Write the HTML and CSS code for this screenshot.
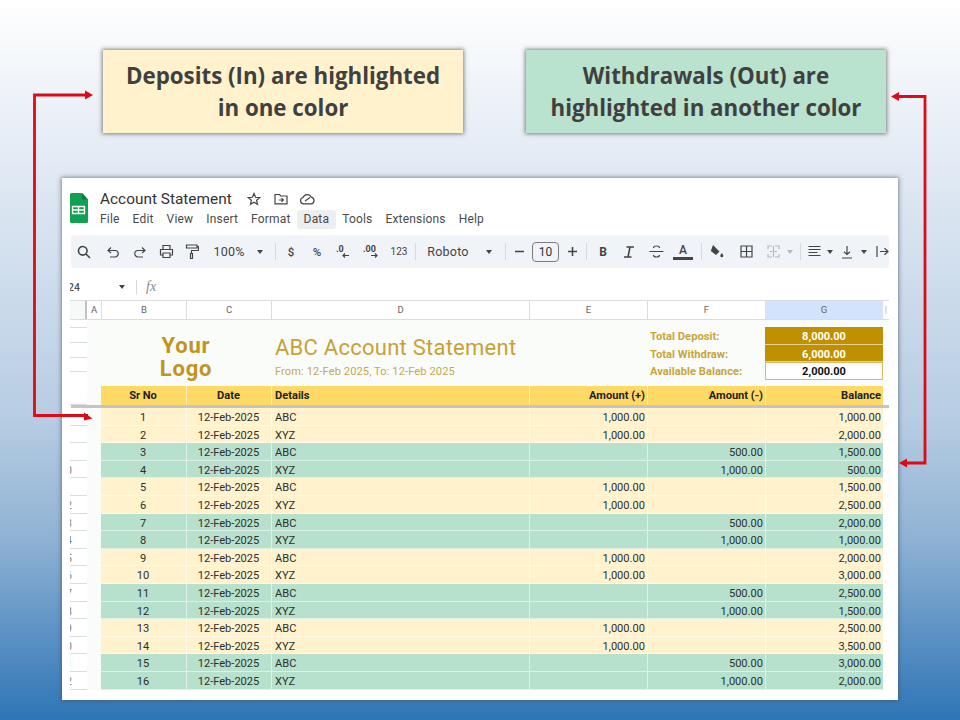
FILE: index.html
```html
<!DOCTYPE html>
<html lang="en">
<head>
<meta charset="utf-8">
<title>Account Statement</title>
<link rel="stylesheet" href="styles.css">
</head>
<body>
<svg class="arrows" width="960" height="720" viewBox="0 0 960 720" aria-hidden="true">
  <path class="arrow-line" d="M86 95H34.500V415.500H88"/>
  <path class="arrow-line" d="M898 96.500H925V463H906"/>
  <path class="arrow-head" d="M85 90.500L93 95L85 99.500Z"/>
  <path class="arrow-head" d="M84 412.500L92.500 418.500L84 420.500Z"/>
  <path class="arrow-head" d="M899 92L891 96.500L899 101Z"/>
  <path class="arrow-head" d="M907 458.500L899 463L907 467.500Z"/>
</svg>
<div class="callouts">
  <div class="callout callout-in">Deposits (In) are highlighted<br>in one color</div>
  <div class="callout callout-out">Withdrawals (Out) are<br>highlighted in another color</div>
</div>
<main class="window">
  <header class="doc-head">
    <svg class="sheets-logo" width="18" height="30" viewBox="0 0 18 30"><path fill="#12a150" d="M1.500 0H12L18 6.500V28.500A1.500 1.500 0 0 1 16.500 30H1.500A1.500 1.500 0 0 1 0 28.500V1.500A1.500 1.500 0 0 1 1.500 0Z"/><path fill="#0b7d3c" d="M12 0L18 6.500H13A1 1 0 0 1 12 5.500Z"/><path fill="none" stroke="#fff" stroke-width="1.300" d="M2.500 13.500H14.500V20.500H2.500ZM2.500 17H14.500M8.500 13.500V20.500"/></svg>
    <div class="doc-text">
      <div class="doc-title-row">
        <span class="doc-title">Account Statement</span>
        <svg class="i-star" width="14" height="14" viewBox="0 0 14 14"><path class="ico" d="M7 1.500L8.600 5.300L12.700 5.600L9.600 8.300L10.500 12.300L7 10.200L3.500 12.300L4.400 8.300L1.300 5.600L5.400 5.300Z"/></svg>
        <svg class="i-folder" width="14" height="12" viewBox="0 0 14 12"><path class="ico" d="M1 1.500H5.500L6.800 3H13V10.800H1ZM5 7H9M7.500 5.300L9.300 7L7.500 8.700"/></svg>
        <svg class="i-cloud" width="17" height="12" viewBox="0 0 17 12"><path class="ico" d="M4.500 10.800A3.200 3.200 0 0 1 4 4.500A4.500 4.500 0 0 1 12.300 4.200A3.400 3.400 0 0 1 12.500 10.800ZM6 8L11 4.500"/></svg>
      </div>
      <nav class="menu">
        <span>File</span><span>Edit</span><span>View</span><span>Insert</span><span>Format</span><span class="menu-on">Data</span><span>Tools</span><span>Extensions</span><span>Help</span>
      </nav>
    </div>
  </header>

  <div class="toolbar">
    <span class="tb w26"><svg width="14" height="14" viewBox="0 0 14 14"><path class="ico ico-b" d="M5.800 1.500A4.300 4.300 0 1 1 5.700 10.100A4.300 4.300 0 0 1 5.800 1.500ZM8.800 8.800L13 13"/></svg></span>
    <span class="tb w32"><svg width="14" height="14" viewBox="0 0 14 14"><path class="ico" d="M5 2.500L2 5.500L5 8M2.500 5.500H9A3 3 0 0 1 9 12H4"/></svg></span>
    <span class="tb w22"><svg width="14" height="14" viewBox="0 0 14 14"><path class="ico" d="M9 2.500L12 5.500L9 8M11.500 5.500H5A3 3 0 0 0 5 12H10"/></svg></span>
    <span class="tb w30"><svg width="15" height="15" viewBox="0 0 15 15"><path class="ico" d="M4 5V1.500H11V5M3.500 11H1.500V5.500H13.500V11H11.500M4 9H11V13.500H4Z"/></svg></span>
    <span class="tb w22"><svg width="14" height="16" viewBox="0 0 14 16"><path class="ico" d="M1.500 1H12V4H1.500ZM12 2.500H13.500V6.500H6.500V9.500M5.500 9.500H7.500V14.500H5.500Z"/></svg></span>
    <span class="tb w52 tb-text">100%</span>
    <span class="tb w10"><i class="caret"></i></span>
    <i class="sep sep-g"></i>
    <span class="tb w30 tb-small">$</span>
    <span class="tb w22 tb-small">%</span>
    <span class="tb w30"><svg width="16" height="15" viewBox="0 0 16 15"><text class="ico-text" x="1" y="8">.0</text><path class="ico" d="M14 11.500H8M10 9.500L8 11.500L10 13.500"/></svg></span>
    <span class="tb w28"><svg width="20" height="15" viewBox="0 0 20 15"><text class="ico-text" x="1" y="8">.00</text><path class="ico" d="M9 11.500H15M13 9.500L15 11.500L13 13.500"/></svg></span>
    <span class="tb w26 tb-tiny">123</span>
    <i class="sep sep-a"></i>
    <span class="tb w64 tb-text">Roboto</span>
    <span class="tb w18"><i class="caret"></i></span>
    <i class="sep sep-b"></i>
    <span class="tb w26"><svg width="11" height="11" viewBox="0 0 11 11"><path class="ico ico-b" d="M1 5.500H10"/></svg></span>
    <span class="size-box">10</span>
    <span class="tb w26"><svg width="11" height="11" viewBox="0 0 11 11"><path class="ico ico-b" d="M1 5.500H10M5.500 1V10"/></svg></span>
    <i class="sep sep-c"></i>
    <span class="tb w32 tb-b">B</span>
    <span class="tb w20"><svg width="12" height="12" viewBox="0 0 12 12"><path class="ico ico-b" d="M3.500 1H11M1 11H8.500M7 1L5 11"/></svg></span>
    <span class="tb w34"><svg width="15" height="13" viewBox="0 0 15 13"><path class="ico" d="M0.500 6.500H14.500M10.500 3A3 2 0 0 0 4.500 3M4.500 10A3 2 0 0 0 10.500 10"/></svg></span>
    <span class="tb w20"><svg width="20" height="18" viewBox="0 0 20 18"><text class="ico-a" x="10" y="11">A</text><rect x="0" y="14" width="20" height="3" fill="#444"/></svg></span>
    <i class="sep sep-d"></i>
    <span class="tb w30"><svg width="14" height="13" viewBox="0 0 14 13"><path fill="#444" d="M3 0L9.500 6.500L6 10L0.800 6ZM11.800 8C13 9.500 13.300 10 13.300 10.700A1.500 1.500 0 0 1 10.300 10.700C10.300 10 10.800 9.500 11.800 8Z"/></svg></span>
    <span class="tb w28"><svg width="13" height="13" viewBox="0 0 13 13"><path class="ico" d="M1 1H12V12H1ZM1 6.500H12M6.500 1V12"/></svg></span>
    <span class="tb w26"><svg width="13" height="13" viewBox="0 0 13 13"><path class="ico ico-dim" d="M1 4V1H5M8 1H12V4M1 9V12H5M8 12H12V9M3 6.500H5.500M7.500 6.500H10M6.500 1V12"/></svg></span>
    <span class="tb w8"><i class="caret caret-dim"></i></span>
    <i class="sep sep-e"></i>
    <span class="tb w26"><svg width="13" height="13" viewBox="0 0 13 13"><path class="ico" d="M0.500 1.500H12.500M0.500 4.500H12.500M0.500 7.500H9.500M0.500 10.500H12.500"/></svg></span>
    <span class="tb w6"><i class="caret"></i></span>
    <span class="tb w28"><svg width="12" height="14" viewBox="0 0 12 14"><path class="ico" d="M6 1V9.500M3 6.800L6 9.500L9 6.800M1 13H11"/></svg></span>
    <span class="tb w6"><i class="caret"></i></span>
    <span class="tb w30"><svg width="13" height="13" viewBox="0 0 13 13"><path class="ico" d="M1 1V12M4 6.500H12M8.500 3.200L12 6.500L8.500 9.800"/></svg></span>
  </div>

  <div class="formula">
    <span class="name-box">24</span>
    <i class="caret"></i>
    <i class="sep sep-f"></i>
    <span class="fx">fx</span>
  </div>

  <div class="sheet">
    <div class="grid col-heads">
      <div class="corner"></div>
      <div>A</div><div>B</div><div>C</div><div>D</div><div>E</div><div>F</div><div class="col-on">G</div><div class="col-h">|</div>
    </div>

    <div class="grid summary">
      <div class="gutter gutter-span"><i></i><i></i><i></i><i></i></div>
      <div class="logo">Your<br>Logo</div>
      <div class="report">
        <div class="report-title">ABC Account Statement</div>
        <div class="report-range">From: 12-Feb 2025, To: 12-Feb 2025</div>
      </div>
      <div class="totals">
        <div class="tot-label">Total Deposit:</div><div class="tot-val">8,000.00</div>
        <div class="tot-label">Total Withdraw:</div><div class="tot-val">6,000.00</div>
        <div class="tot-label">Available Balance:</div><div class="tot-val tot-final">2,000.00</div>
      </div>
    </div>

    <div class="grid row head">
      <div class="rn"></div><div class="a"></div><div class="c">Sr No</div><div class="c">Date</div><div>Details</div><div class="r">Amount (+)</div><div class="r">Amount (-)</div><div class="r">Balance</div>
    </div>
    <div class="freeze"></div>

    <div class="grid row in"><div class="rn"></div><div class="a"></div><div class="c">1</div><div class="c">12-Feb-2025</div><div>ABC</div><div class="r">1,000.00</div><div class="r"></div><div class="r">1,000.00</div></div>
    <div class="grid row in"><div class="rn"></div><div class="a"></div><div class="c">2</div><div class="c">12-Feb-2025</div><div>XYZ</div><div class="r">1,000.00</div><div class="r"></div><div class="r">2,000.00</div></div>
    <div class="grid row out"><div class="rn"></div><div class="a"></div><div class="c">3</div><div class="c">12-Feb-2025</div><div>ABC</div><div class="r"></div><div class="r">500.00</div><div class="r">1,500.00</div></div>
    <div class="grid row out"><div class="rn">10</div><div class="a"></div><div class="c">4</div><div class="c">12-Feb-2025</div><div>XYZ</div><div class="r"></div><div class="r">1,000.00</div><div class="r">500.00</div></div>
    <div class="grid row in"><div class="rn"></div><div class="a"></div><div class="c">5</div><div class="c">12-Feb-2025</div><div>ABC</div><div class="r">1,000.00</div><div class="r"></div><div class="r">1,500.00</div></div>
    <div class="grid row in"><div class="rn">12</div><div class="a"></div><div class="c">6</div><div class="c">12-Feb-2025</div><div>XYZ</div><div class="r">1,000.00</div><div class="r"></div><div class="r">2,500.00</div></div>
    <div class="grid row out"><div class="rn">13</div><div class="a"></div><div class="c">7</div><div class="c">12-Feb-2025</div><div>ABC</div><div class="r"></div><div class="r">500.00</div><div class="r">2,000.00</div></div>
    <div class="grid row out"><div class="rn">14</div><div class="a"></div><div class="c">8</div><div class="c">12-Feb-2025</div><div>XYZ</div><div class="r"></div><div class="r">1,000.00</div><div class="r">1,000.00</div></div>
    <div class="grid row in"><div class="rn">15</div><div class="a"></div><div class="c">9</div><div class="c">12-Feb-2025</div><div>ABC</div><div class="r">1,000.00</div><div class="r"></div><div class="r">2,000.00</div></div>
    <div class="grid row in"><div class="rn">16</div><div class="a"></div><div class="c">10</div><div class="c">12-Feb-2025</div><div>XYZ</div><div class="r">1,000.00</div><div class="r"></div><div class="r">3,000.00</div></div>
    <div class="grid row out"><div class="rn">17</div><div class="a"></div><div class="c">11</div><div class="c">12-Feb-2025</div><div>ABC</div><div class="r"></div><div class="r">500.00</div><div class="r">2,500.00</div></div>
    <div class="grid row out"><div class="rn">18</div><div class="a"></div><div class="c">12</div><div class="c">12-Feb-2025</div><div>XYZ</div><div class="r"></div><div class="r">1,000.00</div><div class="r">1,500.00</div></div>
    <div class="grid row in"><div class="rn">19</div><div class="a"></div><div class="c">13</div><div class="c">12-Feb-2025</div><div>ABC</div><div class="r">1,000.00</div><div class="r"></div><div class="r">2,500.00</div></div>
    <div class="grid row in"><div class="rn">20</div><div class="a"></div><div class="c">14</div><div class="c">12-Feb-2025</div><div>XYZ</div><div class="r">1,000.00</div><div class="r"></div><div class="r">3,500.00</div></div>
    <div class="grid row out"><div class="rn">21</div><div class="a"></div><div class="c">15</div><div class="c">12-Feb-2025</div><div>ABC</div><div class="r"></div><div class="r">500.00</div><div class="r">3,000.00</div></div>
    <div class="grid row out"><div class="rn">22</div><div class="a"></div><div class="c">16</div><div class="c">12-Feb-2025</div><div>XYZ</div><div class="r"></div><div class="r">1,000.00</div><div class="r">2,000.00</div></div>
  </div>
</main>
</body>
</html>
```

FILE: styles.css
```css
* { box-sizing: border-box; }
html, body { margin: 0; height: 720px; overflow: hidden; }
body {
  position: relative;
  width: 960px;
  font-family: Roboto, sans-serif;
  background: linear-gradient(180deg, #ffffff 0%, #dfe8f3 25%, #b7cde3 58%, #8fb2d4 75%, #2e75b6 100%);
}
.arrows { position: absolute; left: 0; top: 0; z-index: 5; }
.arrow-line { fill: none; stroke: #df0a17; stroke-width: 2.8; }
.arrow-head { fill: #df0a17; }

.callouts { display: flex; justify-content: space-between; padding: 50px 74px 0 103px; }
.callout {
  width: 360px; height: 83px;
  display: flex; align-items: center; justify-content: center; text-align: center;
  font-family: "Open Sans", sans-serif; font-weight: 700; font-size: 22.300px; line-height: 32px;
  color: #404040; box-shadow: 0 0 4px 1px rgba(70,70,70,.65);
}
.callout-in { background: #fff2cc; }
.callout-out { background: #b9e2cf; }

.window {
  margin: 45px 0 0 62px; width: 836px; height: 522px;
  background: #fff; box-shadow: 0 0 4px 1px rgba(70,80,100,.6);
  padding-left: 8px; color: #444;
}

.doc-head { height: 57px; display: flex; padding-top: 15px; }
.sheets-logo { flex: none; }
.doc-text { margin-left: 12px; }
.doc-title-row { height: 15px; display: flex; align-items: center; margin-top: -2px; }
.doc-title { font-size: 15.400px; color: #333; width: 147px; white-space: nowrap; }
.i-folder { margin-left: 13px; }
.i-cloud { margin-left: 11px; }
.ico { fill: none; stroke: #444; stroke-width: 1.2; }
.ico-b { stroke-width: 1.6; }
.ico-dim { stroke: #b5b9bd; }
.ico-text { font: 700 9px Roboto, sans-serif; fill: #444; }
.ico-a { font: 500 12px Roboto, sans-serif; fill: #444; text-anchor: middle; }

.menu { display: flex; margin-top: 4px; font-size: 12px; letter-spacing: .18px; color: #4a4a4a; height: 19px; align-items: center; }
.menu span { padding: 0 6.500px; line-height: 19px; white-space: nowrap; }
.menu span:first-child { padding-left: 0; }
.menu-on { background: #eceef0; border-radius: 3px; }

.toolbar {
  height: 33px; width: 818px; margin-left: 1px; background: #f0f4f9; border-radius: 4px;
  display: flex; align-items: center; color: #444; overflow: hidden;
}
.tb { flex: none; display: flex; align-items: center; justify-content: center; height: 100%; }
.tb-text { font-size: 12.500px; letter-spacing: .2px; }
.tb-small { font-size: 11.500px; font-weight: 500; }
.tb-tiny { font-size: 10px; }
.tb-b { font-size: 12px; font-weight: 700; }
.w6 { width: 6px; } .w8 { width: 8px; } .w10 { width: 10px; } .w18 { width: 18px; } .w20 { width: 20px; }
.w22 { width: 22px; } .w26 { width: 26px; } .w28 { width: 28px; } .w30 { width: 30px; }
.w32 { width: 32px; } .w34 { width: 34px; } .w52 { width: 52px; } .w64 { width: 64px; }
.caret { display: block; flex: none; width: 0; height: 0; border: 3.500px solid transparent; border-top: 4px solid #444; border-bottom: 0; }
.caret-dim { border-top-color: #b5b9bd; }
.sep { flex: none; display: block; width: 1px; height: 17px; background: #d5d8dc; }
.sep-g { margin-left: 10px; }
.sep-a { margin-left: 3px; }
.sep-b { margin-left: 7px; }
.sep-c { margin-left: 1px; }
.sep-d { margin-left: 8px; }
.sep-e { margin-left: 6px; }
.size-box {
  flex: none; width: 27px; height: 20px; border: 1px solid #7a7d80; border-radius: 4px;
  font-size: 12px; text-align: center; line-height: 18px; color: #333;
}

.formula { height: 32px; display: flex; align-items: center; color: #555; padding-top: 6px; }
.name-box { width: 49px; font-size: 10.500px; font-weight: 500; overflow: hidden; text-indent: -2px; }
.sep-f { height: 14px; margin-left: 11px; }
.fx { margin-left: 9px; font: italic 14px "Liberation Serif", serif; color: #8a8a8a; }

.sheet { width: 819px; }
.grid { display: grid; grid-template-columns: 17px 14px 85px 85px 258px 118px 118px 118px 6px; }

.col-heads { height: 20px; border-top: 1px solid #dadce0; border-bottom: 1px solid #dadce0; font-size: 9.500px; color: #666; line-height: 18px; text-align: center; }
.col-heads > div + div { border-left: 1px solid #dadce0; }
.col-heads .corner { border-right: 2px solid #bfc2c6; background: #f7f8f8; }
.col-heads .corner + div { border-left: 0; }
.col-heads .col-on { background: #d3e3fd; border-left: 0; }
.col-heads .col-h { border-left: 0; overflow: hidden; color: #aaa; }

.summary { height: 66px; grid-template-rows: 66px; background: #fafcfa; }
.gutter { background: #fff; }
.gutter-span { display: flex; flex-direction: column; padding-top: 7px; }
.gutter-span i { display: block; height: 17.600px; border-top: 1px solid #dadce0; }
.logo { grid-column: 2 / 5; color: #bf9422; font-size: 22px; font-weight: 700; letter-spacing: .8px; line-height: 23px; text-align: center; padding-top: 14px; padding-left: 14px; }
.report { grid-column: 5 / 7; padding: 14px 0 0 4px; }
.report-title { font-size: 22px; line-height: 28px; color: #c9a135; letter-spacing: .25px; white-space: nowrap; }
.report-range { font-size: 11.100px; line-height: 14px; margin-top: 3px; color: #c9a74e; letter-spacing: .1px; }
.totals { grid-column: 7 / 9; display: grid; grid-template-columns: 118px 118px; grid-auto-rows: 17.600px; padding-top: 7px; }
.tot-label { font-size: 11.200px; font-weight: 700; line-height: 19px; padding-left: 3px; color: #c9a53a; white-space: nowrap; }
.tot-val { font-size: 11px; font-weight: 700; line-height: 19px; text-align: center; background: #bf9000; color: #fff; border-bottom: 1px solid #e4cf8e; }
.tot-final { background: #fff; color: #111; border: 1px solid #d8b95f; line-height: 17px; }

.row { height: 17.600px; grid-template-rows: 17.600px; font-size: 11.100px; line-height: 19.500px; color: #2e2e2e; }
.row > div { padding: 0 2px 0 3px; white-space: nowrap; border-bottom: 1px solid rgba(255,255,255,.55); }
.row > div + div { border-left: 1px solid rgba(255,255,255,.55); }
.row > .rn, .row > .a { background: #fafcfa; border: 0; padding: 0; }
.row > .a + div { border-left: 0; }
.row > .rn {
  background: #fff; overflow: hidden; direction: rtl; text-align: right; font-size: 10px; color: #777;
  padding-right: 15px; border-bottom: 1px solid #dadce0;
}
.row .c { text-align: center; padding: 0 3px 0 2px; }
.row .r { text-align: right; }
.head { height: 18.500px; grid-template-rows: 18.500px; font-weight: 700; color: #222; }
.head > div { background: #ffd966; border: 0; }
.in > div { background: #fff2cc; }
.out > div { background: #b7e1cd; }
.freeze { height: 3.500px; width: 818px; margin-left: 1px; background: #c4c4c4; }
```
